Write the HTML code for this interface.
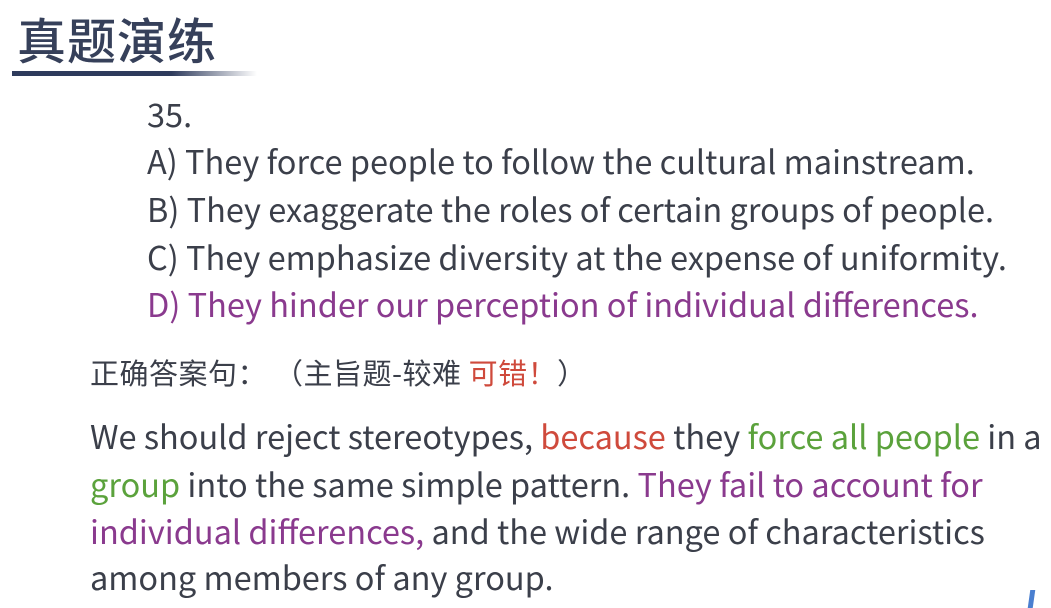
<!DOCTYPE html>
<html><head><meta charset="utf-8"><style>
body{margin:0;width:1051px;height:608px;background:#fff;overflow:hidden;position:relative;font-family:"Noto Sans CJK SC","Liberation Sans",sans-serif;color:#3b3f4a}
.t{position:absolute;left:17px;top:9px;font-size:49px;font-weight:500;color:#36405a;letter-spacing:1px;line-height:60px}
.bar{position:absolute;left:12px;top:71px;width:245px;height:5px;background:linear-gradient(90deg,#2e3b5c 0%,#2e3b5c 65%,rgba(46,59,92,0) 100%)}
.l{position:absolute;white-space:nowrap;font-size:32.5px;line-height:40px}
.p{color:#8a3a8e}.r{color:#cf4a3c}.g{color:#5ba23c}
.cn{font-size:29px;letter-spacing:0.5px}
</style></head><body>
<div class="t">真题演练</div>
<div class="bar"></div>
<div class="l" style="left:147px;top:94px">35.</div>
<div class="l" style="left:147px;top:141px">A) They force people to follow the cultural mainstream.</div>
<div class="l" style="left:147px;top:189px">B) They exaggerate the roles of certain groups of people.</div>
<div class="l" style="left:147px;top:237px">C) They emphasize diversity at the expense of uniformity.</div>
<div class="l p" style="left:147px;top:284px">D) They hinder our perception of individual differences.</div>
<div class="l cn" style="left:90px;top:352px">正确答案句：&nbsp;（主旨题-较难 <span class="r">可错！</span>）</div>
<div class="l" style="left:90px;top:416px">We should reject stereotypes, <span class="r">because</span> they <span class="g">force all people</span> in a</div>
<div class="l" style="left:90px;top:464px"><span class="g">group</span> into the same simple pattern. <span class="p">They fail to account for</span></div>
<div class="l" style="left:90px;top:511px"><span class="p">individual differences,</span> and the wide range of characteristics</div>
<div class="l" style="left:90px;top:557px">among members of any group.</div>
<div style="position:absolute;left:1029px;top:590px;width:5px;height:18px;background:#4a7fd0;transform:skewX(-8deg)"></div>
</body></html>
